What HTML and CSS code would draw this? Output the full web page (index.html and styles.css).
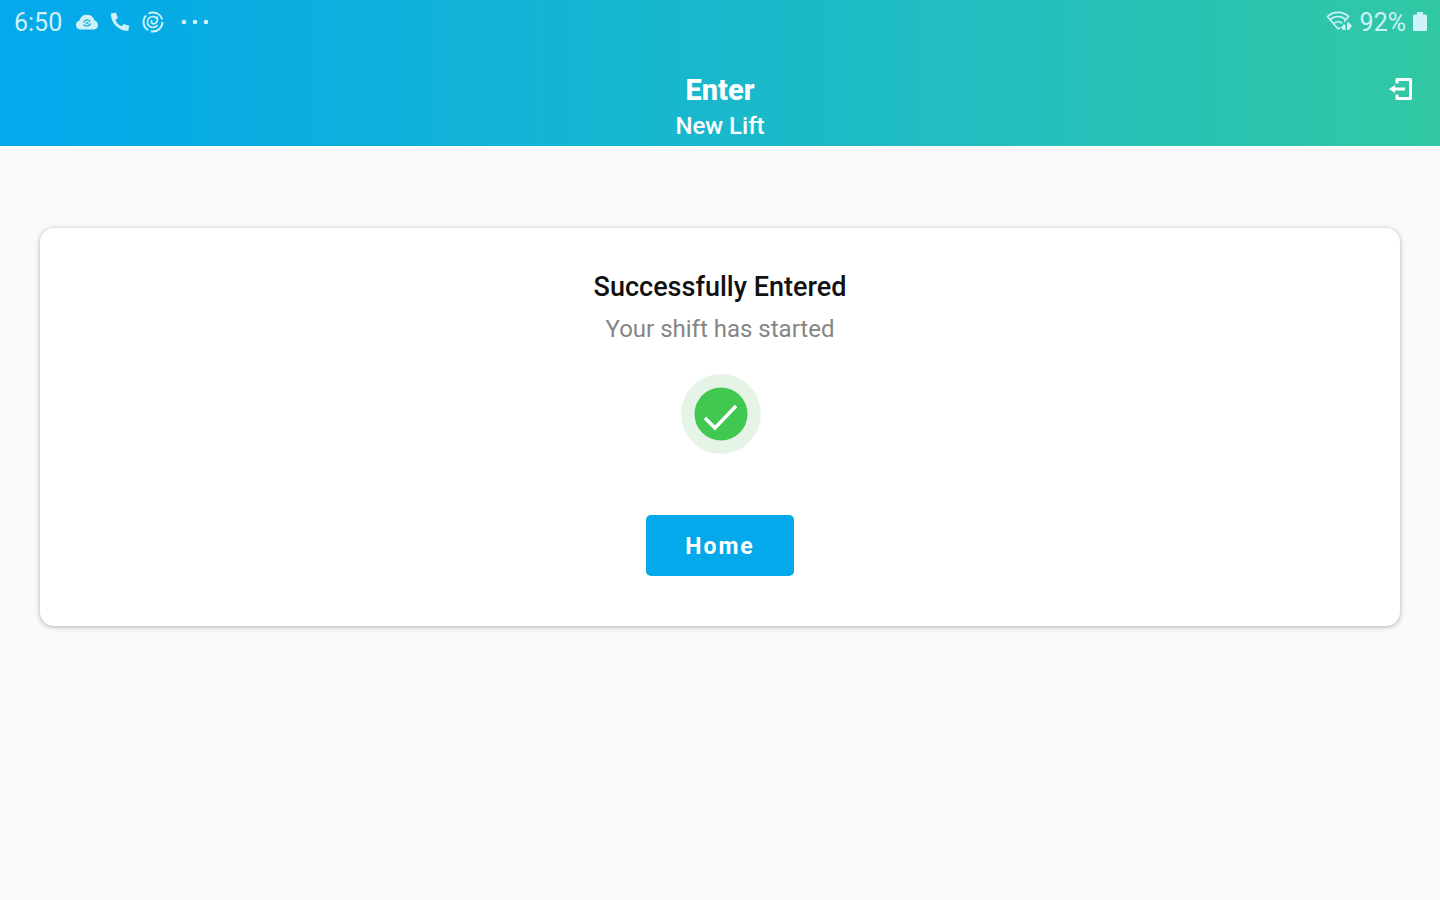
FILE: index.html
```html
<!DOCTYPE html>
<html lang="en">
<head>
    <meta charset="UTF-8">
    <meta name="viewport" content="width=device-width, initial-scale=1.0">
    <title>Enter - New Lift</title>
    <link rel="stylesheet" href="styles.css">
</head>
<body>
    <header class="header">
        <div class="status_bar">
            <div class="status_left">
                <span>6:50</span>
                <svg class="icon_cloud" width="24" height="16" viewBox="0 0 24 16" aria-hidden="true">
                    <path d="M5 15.500a4.600 4.600 0 0 1-.6-9A7.800 7.800 0 0 1 19.500 6.500a4.600 4.600 0 0 1-.5 9z" fill="currentColor"/>
                    <path d="M8.300 8.500a4 3.500 0 0 1 7-1M15.700 9.500a4 3.500 0 0 1-7 1" fill="none" stroke="#18a9df" stroke-width="1.400"/>
                    <path d="M10.500 9h3" stroke="#18a9df" stroke-width="1.400"/>
                </svg>
                <svg class="icon_phone" width="20" height="20" viewBox="0 0 20 20" aria-hidden="true">
                    <path d="M1 1.500 5.800.5l2 5.300-2.300 2.400c1.300 2.800 3.200 4.700 6 6l2.300-2.200 5.400 1.700-.8 5C9.500 19.500.500 11.500 1 1.500z" fill="currentColor"/>
                </svg>
                <svg class="icon_swirl" width="22" height="22" viewBox="0 0 22 22" fill="none" stroke="currentColor" aria-hidden="true">
                    <circle cx="11" cy="11" r="9.500" stroke-width="2" stroke-dasharray="17 2.900"/>
                    <path d="M15.500 8A5.500 5.500 0 1 0 15.500 14" stroke-width="1.700"/>
                    <path d="M9.500 9c-.5 3.500 1.500 4.500 3.500 3.500s3-3.500 2-7" stroke-width="1.700"/>
                </svg>
                <svg class="icon_dots" width="28" height="6" viewBox="0 0 28 6" fill="currentColor" aria-hidden="true">
                    <circle cx="3" cy="3" r="2.300"/>
                    <circle cx="14" cy="3" r="2.300"/>
                    <circle cx="25" cy="3" r="2.300"/>
                </svg>
            </div>
            <div class="status_right">
                <svg width="28" height="24" viewBox="0 0 28 24" aria-hidden="true">
                    <g fill="none" stroke="currentColor" stroke-width="1.600">
                        <path d="M14 17.500 12 19 1.500 6.500C7 1 17 1 22.500 6.500L18 12"/>
                        <path d="M4.500 9.500c4-4 11-4 15 0M8 13.500c2-2.300 6-2.300 8 0"/>
                    </g>
                    <path d="M15 17.500 18 14l1.500 1.500V20H17zM21 12.500h2l3 3.500-3 4h-2z" fill="currentColor"/>
                </svg>
                <span>92%</span>
                <svg class="icon_battery" width="16" height="20" viewBox="0 0 16 20" aria-hidden="true">
                    <path d="M1 4q0-1.500 1.500-1.500H5V0h6v2.500h2.500Q15 2.500 15 4v13.500q0 1.500-1.500 1.500h-11Q1 19 1 17.500z" fill="currentColor"/>
                </svg>
            </div>
        </div>
        <div class="toolbar">
            <div class="titles">
                <h1>Enter</h1>
                <p>New Lift</p>
            </div>
            <button class="exit" type="button" aria-label="Exit">
                <svg width="24" height="24" viewBox="0 0 24 24" aria-hidden="true">
                    <path d="M8 6.500V2.500h13.500v19H8v-4M5 12h11" fill="none" stroke="currentColor" stroke-width="3" stroke-linejoin="round"/>
                    <path d="M0 12l6-4v8z" fill="currentColor"/>
                </svg>
            </button>
        </div>
    </header>

    <main class="container">
        <section class="card">
            <h2>Successfully Entered</h2>
            <p>Your shift has started</p>
            <svg class="check" width="82" height="82" viewBox="0 0 82 82" aria-hidden="true">
                <circle cx="42" cy="41" r="40" fill="#e6f4e7"/>
                <circle cx="42" cy="41" r="26.500" fill="#40c851"/>
                <path d="M26 45l10 10L57 33" fill="none" stroke="#fff" stroke-width="3.500"/>
            </svg>
            <button class="home" type="button">Home</button>
        </section>
    </main>
</body>
</html>
```
FILE: styles.css
```css
* {
    box-sizing: border-box;
}
body {
    font-family: Roboto, "Liberation Sans", sans-serif;
    margin: 0;
    background-color: #fafafa;
}
h1, h2, p {
    margin: 0;
}
svg {
    display: block;
    flex: none;
}
button {
    border: none;
    padding: 0;
    color: #fff;
    font-family: inherit;
    cursor: pointer;
}

.header {
    color: #fff;
    background: linear-gradient(90deg, #03a9ea 4%, #20bdc2 65%, #32c8a4);
}
.status_bar {
    display: flex;
    justify-content: space-between;
    height: 44px;
    padding: 0 12px 0 14px;
    color: #cdf3f8;
    font-size: 25px;
}
.status_left, .status_right {
    display: flex;
    align-items: center;
}
.icon_cloud {
    margin-left: 13px;
}
.icon_phone {
    margin-left: 11px;
}
.icon_swirl {
    margin-left: 12px;
}
.icon_dots {
    margin-left: 17px;
}
.status_right {
    gap: 6px;
}
.toolbar {
    display: grid;
    grid-template-columns: 1fr auto 1fr;
    align-items: start;
    height: 102px;
    padding: 28px 27px 0;
}
.titles {
    grid-column: 2;
    text-align: center;
}
.titles h1 {
    font-size: 29px;
    font-weight: 800;
    line-height: 36px;
}
.titles p {
    font-size: 24px;
    font-weight: 500;
    line-height: 36px;
}
.exit {
    justify-self: end;
    margin-top: 5px;
    background: none;
}

.container {
    padding: 82px 40px;
}
.card {
    display: flex;
    flex-direction: column;
    align-items: center;
    padding: 41px 20px 50px;
    background-color: #fff;
    border-radius: 14px;
    box-shadow: 0 1px 5px rgba(0, 0, 0, 0.3);
}
.card h2 {
    color: #111;
    font-size: 27px;
    font-weight: 500;
    line-height: 36px;
}
.card p {
    margin-top: 6px;
    color: #858585;
    font-size: 24px;
    line-height: 36px;
}
.check {
    margin-top: 26px;
}
.home {
    width: 148px;
    height: 61px;
    margin-top: 60px;
    padding-top: 2px;
    background-color: #03a9ea;
    border-radius: 5px;
    font-size: 23px;
    font-weight: 700;
    letter-spacing: 2px;
}
```
